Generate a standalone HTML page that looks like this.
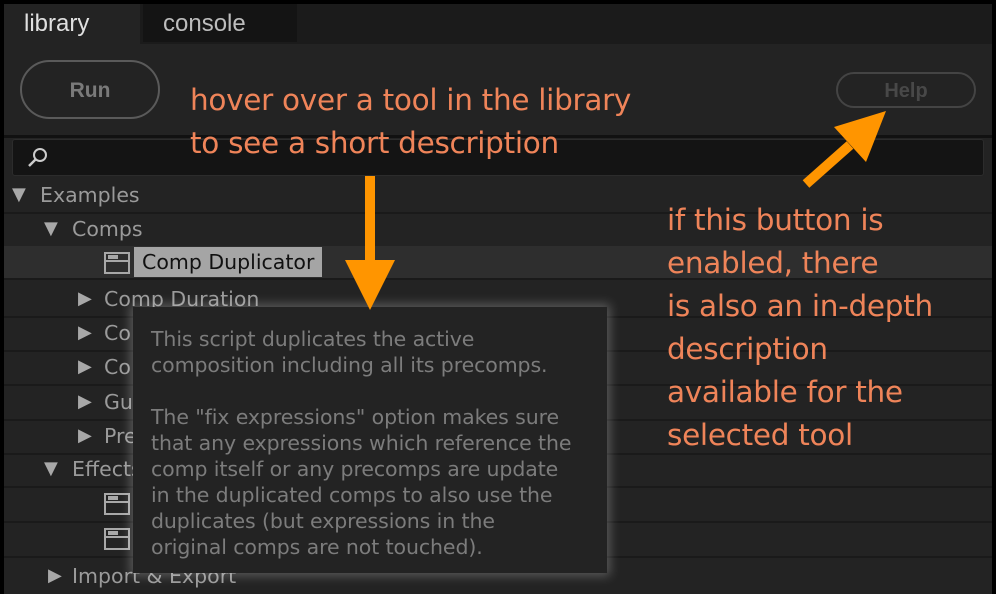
<!DOCTYPE html>
<html><head><style>
body{margin:0;width:996px;height:594px;background:#000;overflow:hidden;position:relative;font-family:"Liberation Sans","DejaVu Sans",sans-serif}
.abs{position:absolute}
.panel{left:4px;top:4px;width:988px;height:590px;background:#232323}
.row{position:absolute;left:4px;width:988px;height:34px;border-bottom:2px solid #1a1a1a;color:#9a9a9a;font-family:"DejaVu Sans",sans-serif;font-size:20.5px;line-height:34px}
.tri{position:absolute;color:#a8a8a8;font-size:18px}
.ann{color:#ef8459;font-size:29.5px;font-family:"DejaVu Sans",sans-serif;letter-spacing:-0.3px}
.icon{position:absolute;width:26px;height:22px;border:2px solid #a8a8a8;box-sizing:border-box;top:6px}
.icon:before{content:"";position:absolute;left:0;right:0;top:6px;border-top:2px solid #a8a8a8}
.icon:after{content:"";position:absolute;left:2px;top:1px;width:10px;height:4px;background:#a8a8a8}
</style></head><body>
<div class="abs panel"></div>
<div class="abs" style="left:4px;top:4px;width:988px;height:40px;background:#1b1b1b"></div>
<div class="abs" style="left:4px;top:4px;width:136px;height:40px;background:#232323;color:#e0e0e0;font-size:24px;line-height:40px;padding-left:20px;box-sizing:border-box">library</div>
<div class="abs" style="left:143px;top:4px;width:154px;height:38px;background:#141414;color:#bdbdbd;font-size:24px;line-height:40px;padding-left:20px;box-sizing:border-box">console</div>
<div class="abs" style="left:20px;top:60px;width:140px;height:59px;border:2px solid #5a5a5a;border-radius:30px;box-sizing:border-box;color:#7a7a7a;font-weight:bold;font-size:21px;line-height:57px;text-align:center">Run</div>
<div class="abs" style="left:836px;top:72px;width:140px;height:36px;border:2px solid #444;border-radius:18px;box-sizing:border-box;color:#484848;font-weight:bold;font-size:20px;line-height:35px;text-align:center">Help</div>
<div class="abs" style="left:4px;top:135px;width:988px;height:3px;background:#111"></div>
<div class="abs" style="left:12px;top:139px;width:972px;height:37px;background:#141414;border:1px solid #2c2c2c;border-radius:3px;box-sizing:border-box"></div>
<svg class="abs" style="left:26px;top:146px" width="24" height="24"><circle cx="14" cy="9" r="6" fill="none" stroke="#ccc" stroke-width="2"/><line x1="10" y1="13" x2="3" y2="20" stroke="#ccc" stroke-width="2.5"/></svg>

<div class="row" style="top:178px"><span class="tri" style="left:8px">▼</span><span style="position:absolute;left:36px">Examples</span></div>
<div class="row" style="top:212px"><span class="tri" style="left:40px">▼</span><span style="position:absolute;left:68px">Comps</span></div>
<div class="row" style="top:246px;background:#2e2e2e;height:32px"><span class="icon" style="left:100px"></span><span style="position:absolute;left:130px;top:1px;height:30px;line-height:30px;background:#a5a5a5;color:#111;padding:0 8px">Comp Duplicator</span></div>
<div class="row" style="top:282px"><span class="tri" style="left:74px">▶</span><span style="position:absolute;left:100px">Comp Duration</span></div>
<div class="row" style="top:316px"><span class="tri" style="left:74px">▶</span><span style="position:absolute;left:100px">Co</span></div>
<div class="row" style="top:350px"><span class="tri" style="left:74px">▶</span><span style="position:absolute;left:100px">Co</span></div>
<div class="row" style="top:385px"><span class="tri" style="left:74px">▶</span><span style="position:absolute;left:100px">Gu</span></div>
<div class="row" style="top:419px"><span class="tri" style="left:74px">▶</span><span style="position:absolute;left:100px">Pre</span></div>
<div class="row" style="top:452px"><span class="tri" style="left:40px">▼</span><span style="position:absolute;left:68px">Effects</span></div>
<div class="row" style="top:487px"><span class="icon" style="left:100px"></span></div>
<div class="row" style="top:522px"><span class="icon" style="left:100px"></span></div>
<div class="row" style="top:559px;border-bottom:none"><span class="tri" style="left:44px">▶</span><span style="position:absolute;left:68px">Import &amp; Export</span></div>

<div class="abs" style="left:133px;top:307px;width:474px;height:266px;background:#232323;box-shadow:0 0 10px 3px rgba(255,255,255,0.25);color:#7c7c7c;font-family:'DejaVu Sans',sans-serif;font-size:20.5px;line-height:26px;padding:19px 0 0 18px;box-sizing:border-box;white-space:nowrap;letter-spacing:-0.1px">This script duplicates the active<br>composition including all its precomps.<br><br>The "fix expressions" option makes sure<br>that any expressions which reference the<br>comp itself or any precomps are update<br>in the duplicated comps to also use the<br>duplicates (but expressions in the<br>original comps are not touched).</div>

<div class="abs ann" style="left:190px;top:79px;line-height:43px">hover over a tool in the library<br>to see a short description</div>
<div class="abs ann" style="left:667px;top:199px;line-height:43px">if this button is<br>enabled, there<br>is also an in-depth<br>description<br>available for the<br>selected tool</div>

<svg class="abs" style="left:0;top:0" width="996" height="594">
<rect x="365" y="176" width="10" height="90" fill="#ff9500"/>
<polygon points="345,260 395,260 370,310" fill="#ff9500"/>
<line x1="806" y1="184" x2="850" y2="145" stroke="#ff9500" stroke-width="10"/>
<polygon points="834,127 886,111 866,162" fill="#ff9500"/>
</svg>
</body></html>
